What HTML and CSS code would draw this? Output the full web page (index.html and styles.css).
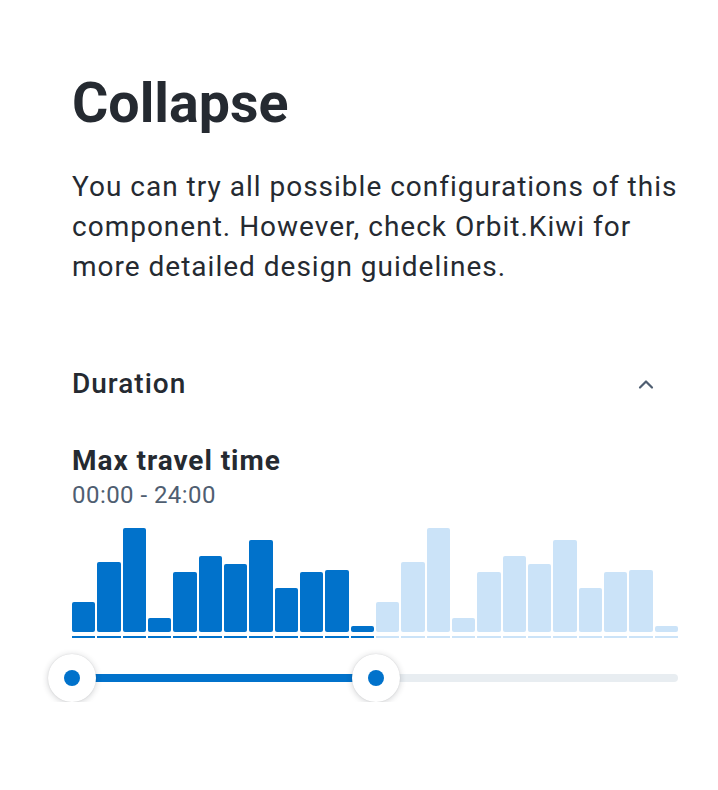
FILE: index.html
```html
<!DOCTYPE html>
<html lang="en">
<head>
<meta charset="utf-8">
<title>Collapse</title>
<link rel="stylesheet" href="styles.css">
</head>
<body>
<main class="page">
  <h1 class="title">Collapse</h1>
  <p class="intro">You can try all possible configurations of this component. However, check Orbit.Kiwi for more detailed design guidelines.</p>

  <section class="collapse">
    <div class="collapse-header">
      <span class="collapse-label">Duration</span>
      <svg class="chevron" width="16" height="12" viewBox="0 0 16 12" aria-hidden="true">
        <path d="M2 9.5 L8 3.5 L14 9.5" fill="none" stroke="#4f5e71" stroke-width="2.2" stroke-linecap="round" stroke-linejoin="round"/>
      </svg>
    </div>

    <div class="slider-label">
      <div class="slider-title">Max travel time</div>
      <div class="slider-value">00:00 - 24:00</div>
    </div>

    <div class="histogram">
      <div class="col on"><div class="bar" style="height:30px"></div><div class="tick"></div></div>
      <div class="col on"><div class="bar" style="height:70px"></div><div class="tick"></div></div>
      <div class="col on"><div class="bar" style="height:104px"></div><div class="tick"></div></div>
      <div class="col on"><div class="bar" style="height:14px"></div><div class="tick"></div></div>
      <div class="col on"><div class="bar" style="height:60px"></div><div class="tick"></div></div>
      <div class="col on"><div class="bar" style="height:76px"></div><div class="tick"></div></div>
      <div class="col on"><div class="bar" style="height:68px"></div><div class="tick"></div></div>
      <div class="col on"><div class="bar" style="height:92px"></div><div class="tick"></div></div>
      <div class="col on"><div class="bar" style="height:44px"></div><div class="tick"></div></div>
      <div class="col on"><div class="bar" style="height:60px"></div><div class="tick"></div></div>
      <div class="col on"><div class="bar" style="height:62px"></div><div class="tick"></div></div>
      <div class="col on"><div class="bar" style="height:6px"></div><div class="tick"></div></div>
      <div class="col"><div class="bar" style="height:30px"></div><div class="tick"></div></div>
      <div class="col"><div class="bar" style="height:70px"></div><div class="tick"></div></div>
      <div class="col"><div class="bar" style="height:104px"></div><div class="tick"></div></div>
      <div class="col"><div class="bar" style="height:14px"></div><div class="tick"></div></div>
      <div class="col"><div class="bar" style="height:60px"></div><div class="tick"></div></div>
      <div class="col"><div class="bar" style="height:76px"></div><div class="tick"></div></div>
      <div class="col"><div class="bar" style="height:68px"></div><div class="tick"></div></div>
      <div class="col"><div class="bar" style="height:92px"></div><div class="tick"></div></div>
      <div class="col"><div class="bar" style="height:44px"></div><div class="tick"></div></div>
      <div class="col"><div class="bar" style="height:60px"></div><div class="tick"></div></div>
      <div class="col"><div class="bar" style="height:62px"></div><div class="tick"></div></div>
      <div class="col"><div class="bar" style="height:6px"></div><div class="tick"></div></div>
    </div>

    <div class="slider">
      <div class="track">
        <div class="track-fill" style="width:50.2%"></div>
      </div>
      <div class="handle" style="left:0%"><span class="handle-dot"></span></div>
      <div class="handle" style="left:50.2%"><span class="handle-dot"></span></div>
    </div>
  </section>
</main>
</body>
</html>
```

FILE: styles.css
```css
* { box-sizing: border-box; }

html, body {
  margin: 0;
  padding: 0;
  background: #ffffff;
}

body {
  font-family: Roboto, "Liberation Sans", Arial, sans-serif;
  color: #252a31;
}

.page {
  padding: 72px 40px 0 72px;
}

.title {
  margin: 0;
  font-size: 55.5px;
  line-height: 64px;
  font-weight: 700;
  color: #252a31;
}

.intro {
  margin: 31px -6px 0 0;
  font-size: 28px;
  line-height: 40px;
  font-weight: 400;
  letter-spacing: 1px;
  color: #252a31;
}

.collapse {
  margin-top: 73px;
}

.collapse-header {
  display: flex;
  align-items: center;
  justify-content: space-between;
  height: 48px;
}

.collapse-label {
  font-size: 28px;
  line-height: 40px;
  font-weight: 500;
  letter-spacing: 1px;
  color: #252a31;
}

.chevron {
  display: block;
  margin-right: 24px;
}

.slider-label {
  margin-top: 35px;
}

.slider-title {
  font-size: 28px;
  line-height: 36px;
  font-weight: 700;
  letter-spacing: 0.95px;
  color: #252a31;
}

.slider-value {
  font-size: 24px;
  line-height: 32px;
  letter-spacing: 0.45px;
  color: #4f5e71;
}

.histogram {
  margin-top: 17px;
  display: flex;
  align-items: flex-end;
  gap: 2px;
}

.col {
  flex: 1 1 0;
  display: flex;
  flex-direction: column;
  gap: 4px;
}

.bar {
  border-radius: 2px;
  background: #cbe3f8;
}

.tick {
  height: 2px;
  background: #cbe3f8;
}

.col.on .bar,
.col.on .tick {
  background: #0172cb;
}

.slider {
  position: relative;
  height: 48px;
  margin-top: 16px;
  display: flex;
  align-items: center;
}

.track {
  flex: 1;
  height: 8px;
  background: #e8edf1;
  border-radius: 4px;
  display: flex;
}

.track-fill {
  background: #0172cb;
  height: 100%;
}

.handle {
  position: absolute;
  top: 0;
  width: 48px;
  height: 48px;
  margin-left: -24px;
  border-radius: 50%;
  background: #ffffff;
  box-shadow: 0 1px 6px rgba(37, 42, 49, 0.22), 0 0 1px rgba(37, 42, 49, 0.16);
  display: flex;
  align-items: center;
  justify-content: center;
}

.handle-dot {
  width: 16px;
  height: 16px;
  border-radius: 50%;
  background: #0172cb;
}
```
